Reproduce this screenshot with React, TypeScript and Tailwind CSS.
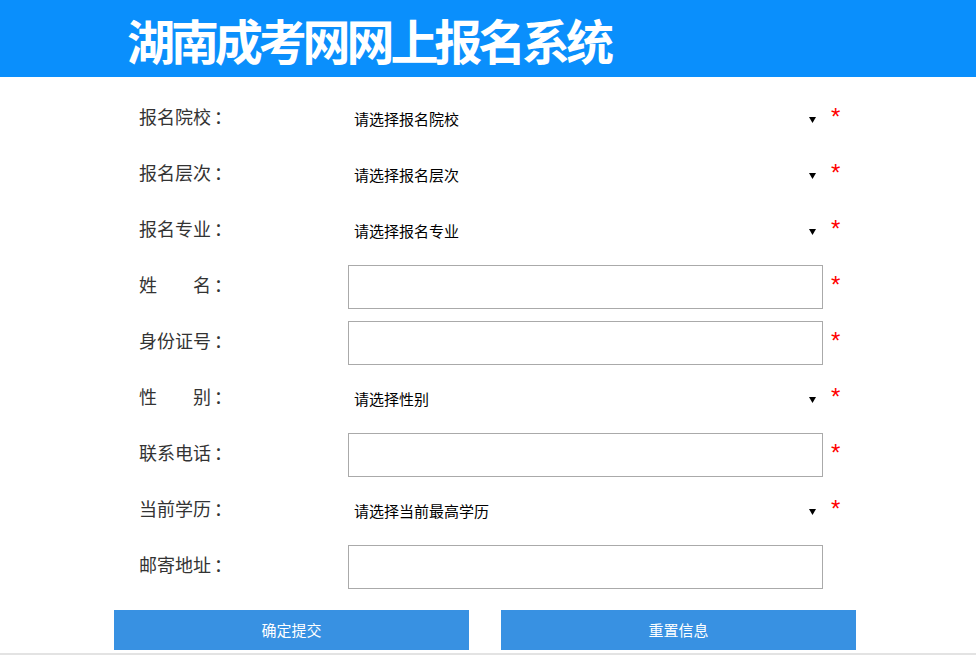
import React from "react";

type Row =
  | { label: React.ReactNode; kind: "select"; placeholder: string; required: boolean }
  | { label: React.ReactNode; kind: "input"; required: boolean };

const spaced = (a: string, b: string) => (
  <span className="flex w-[72px] justify-between">
    <span>{a}</span>
    <span>{b}</span>
  </span>
);

const rows: Row[] = [
  { label: "报名院校", kind: "select", placeholder: "请选择报名院校", required: true },
  { label: "报名层次", kind: "select", placeholder: "请选择报名层次", required: true },
  { label: "报名专业", kind: "select", placeholder: "请选择报名专业", required: true },
  { label: spaced("姓", "名"), kind: "input", required: true },
  { label: "身份证号", kind: "input", required: true },
  { label: spaced("性", "别"), kind: "select", placeholder: "请选择性别", required: true },
  { label: "联系电话", kind: "input", required: true },
  { label: "当前学历", kind: "select", placeholder: "请选择当前最高学历", required: true },
  { label: "邮寄地址", kind: "input", required: false },
];

export default function App() {
  return (
    <div
      className="min-h-[655px] w-full bg-white"
      style={{ fontFamily: '"Noto Sans CJK SC", "Noto Sans", sans-serif' }}
    >
      <header className="flex h-[77px] w-full items-center bg-[#0a8ffc] pl-[127px]">
        <h1 className="text-[48px] font-bold leading-none tracking-[-4.1px] text-white">
          湖南成考网网上报名系统
        </h1>
      </header>

      <form className="flex flex-col gap-[12px] pt-[20px]" onSubmit={(e) => e.preventDefault()}>
        {rows.map((r, i) => (
          <div key={i} className="flex h-[44px] items-start">
            <div className="flex h-[44px] w-[348px] items-center pb-[6px] pl-[139px] text-[18px] text-[#333]">
              {typeof r.label === "string" ? <span>{r.label}</span> : r.label}
              <span className="ml-[3px]">：</span>
            </div>
            {r.kind === "select" ? (
              <div className="flex h-[44px] w-[475px] items-center justify-between pl-[6px] pr-[7px] text-[15px] text-black">
                <span>{r.placeholder}</span>
                <svg width="7" height="6" viewBox="0 0 7 6" className="mt-[1px]">
                  <polygon points="0,0 7,0 3.5,6" fill="#000" />
                </svg>
              </div>
            ) : (
              <input
                type="text"
                className="box-border h-[44px] w-[475px] border border-[#aaa] bg-white px-2 text-[14px] outline-none"
              />
            )}
            <span
              className="ml-[8px] mt-[8px] w-[12px] text-[24px] leading-[24px] text-[#f00]"
              style={{ fontFamily: '"Liberation Sans", Arial, sans-serif' }}
            >
              {r.required ? "*" : ""}
            </span>
          </div>
        ))}

        <div className="mt-[9px] flex gap-[32px] pl-[114px]">
          <button
            type="submit"
            className="h-[40px] w-[355px] bg-[#3891e2] text-[15px] text-white"
          >
            确定提交
          </button>
          <button
            type="reset"
            className="h-[40px] w-[355px] bg-[#3891e2] text-[15px] text-white"
          >
            重置信息
          </button>
        </div>
      </form>
      <div className="mt-[3px] h-[2px] w-full bg-[#e3e3e3]" />
    </div>
  );
}
